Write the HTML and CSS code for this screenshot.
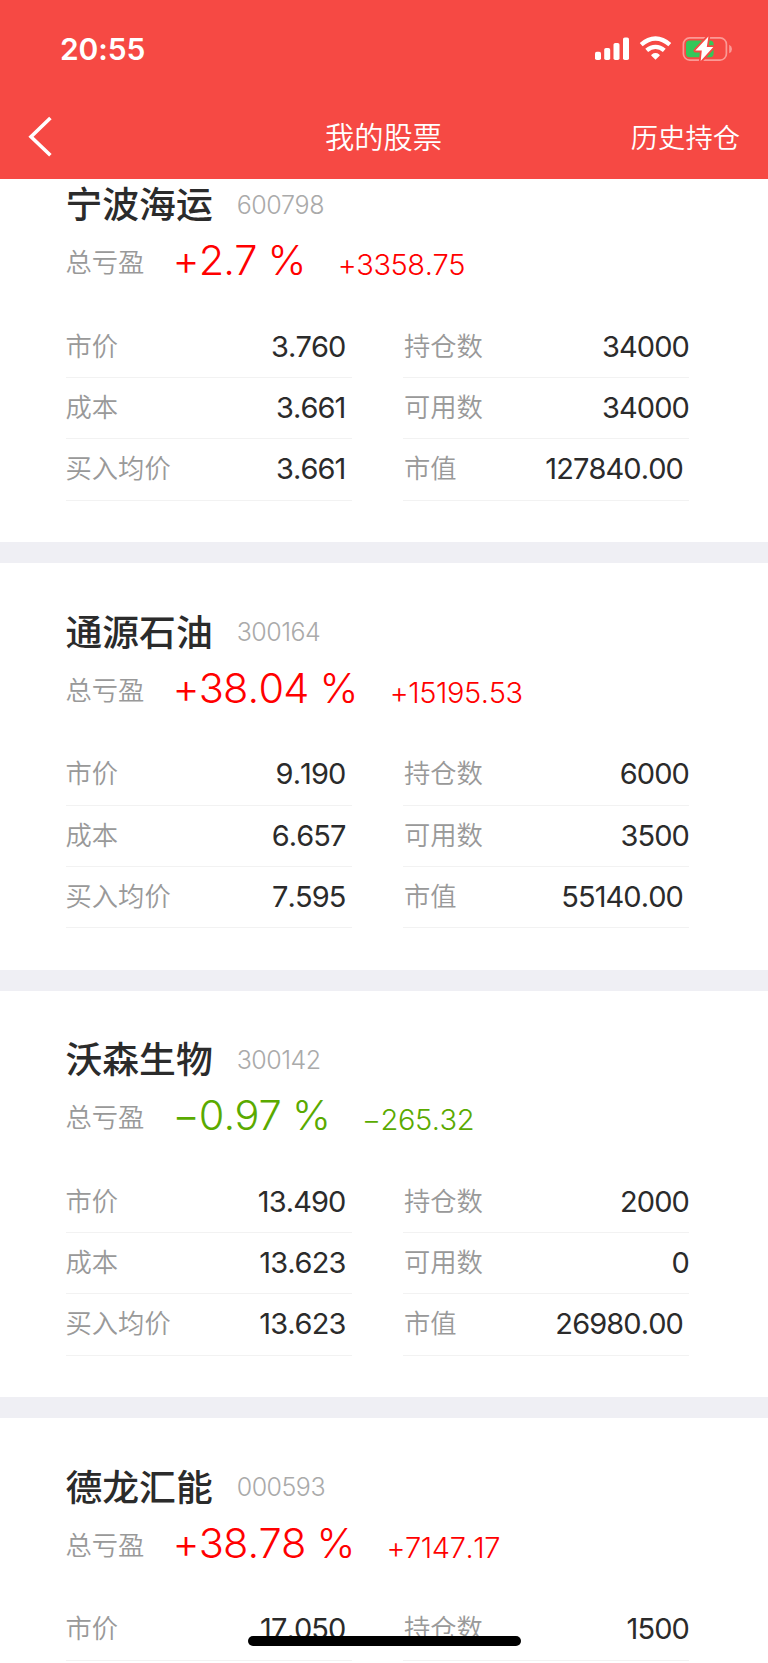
FILE: index.html
```html
<!DOCTYPE html>
<html lang="zh-CN">
<head>
<meta charset="utf-8">
<title>我的股票</title>
<link rel="stylesheet" href="styles.css">
</head>
<body>
<div class="screen">
  <header class="header">
    <div class="status">
      <span class="clock">20:55</span>
      <svg class="status-icons" width="142" height="30" viewBox="0 0 142 30">
        <g fill="#fff">
          <rect x="3" y="17.7" width="6" height="8.3" rx="1.8"/>
          <rect x="12.2" y="14" width="6" height="12" rx="1.8"/>
          <rect x="21.5" y="9" width="6" height="17" rx="1.8"/>
          <rect x="31" y="3.5" width="6" height="22.5" rx="1.8"/>
          <path d="M63.5 25.8 L59.4 21.8 Q58.8 21 59.7 20.4 Q63.5 17.6 67.3 20.4 Q68.2 21 67.6 21.8 Z"/>
        </g>
        <g fill="none" stroke="#fff" stroke-width="4.3">
          <path d="M49.2 10.7 Q56 4.5 63.5 4.5 T77.8 10.7"/>
          <path d="M54.7 16.4 Q58.8 12.8 63.5 12.8 T72.3 16.4"/>
        </g>
        <rect x="91.4" y="3.9" width="43" height="22.2" rx="6.3" fill="none" stroke="#fb9a96" stroke-width="1.7"/>
        <path d="M137.2 10.8 Q140 12 140 15 T137.2 19.2 Z" fill="#fb9a96"/>
        <rect x="94" y="6.6" width="27.6" height="16.6" rx="3.6" fill="#34c759"/>
        <path d="M116.4 2.6 L103.3 16.6 H109.8 L108.7 27 L121.3 13 H114.8 Z" fill="#fff" stroke="#f64944" stroke-width="3.6" paint-order="stroke" stroke-linejoin="round"/>
      </svg>
    </div>
    <nav class="nav">
      <svg class="back" width="26" height="42" viewBox="0 0 26 42"><path d="M23.4 2 L4 20.7 L23.4 39.2" fill="none" stroke="#fff" stroke-width="3.6"/></svg>
      <h1 class="title">我的股票</h1>
      <span class="history">历史持仓</span>
    </nav>
  </header>
  <main class="list">
    <section class="card">
      <div class="head"><h2 class="name">宁波海运</h2><span class="code">600798</span></div>
      <div class="sum up"><span class="label">总亏盈</span><span class="rate">+2.7 %</span><span class="gain">+3358.75</span></div>
      <div class="grid">
        <div class="row"><span class="label">市价</span><span class="val">3.760</span></div>
        <div class="row r"><span class="label">持仓数</span><span class="val">34000</span></div>
        <div class="row"><span class="label">成本</span><span class="val">3.661</span></div>
        <div class="row r"><span class="label">可用数</span><span class="val">34000</span></div>
        <div class="row"><span class="label">买入均价</span><span class="val">3.661</span></div>
        <div class="row r total"><span class="label">市值</span><span class="val">127840.00</span></div>
      </div>
    </section>
    <section class="card">
      <div class="head"><h2 class="name">通源石油</h2><span class="code">300164</span></div>
      <div class="sum up"><span class="label">总亏盈</span><span class="rate">+38.04 %</span><span class="gain">+15195.53</span></div>
      <div class="grid">
        <div class="row"><span class="label">市价</span><span class="val">9.190</span></div>
        <div class="row r"><span class="label">持仓数</span><span class="val">6000</span></div>
        <div class="row"><span class="label">成本</span><span class="val">6.657</span></div>
        <div class="row r"><span class="label">可用数</span><span class="val">3500</span></div>
        <div class="row"><span class="label">买入均价</span><span class="val">7.595</span></div>
        <div class="row r total"><span class="label">市值</span><span class="val">55140.00</span></div>
      </div>
    </section>
    <section class="card">
      <div class="head"><h2 class="name">沃森生物</h2><span class="code">300142</span></div>
      <div class="sum down"><span class="label">总亏盈</span><span class="rate">−0.97 %</span><span class="gain">−265.32</span></div>
      <div class="grid">
        <div class="row"><span class="label">市价</span><span class="val">13.490</span></div>
        <div class="row r"><span class="label">持仓数</span><span class="val">2000</span></div>
        <div class="row"><span class="label">成本</span><span class="val">13.623</span></div>
        <div class="row r"><span class="label">可用数</span><span class="val">0</span></div>
        <div class="row"><span class="label">买入均价</span><span class="val">13.623</span></div>
        <div class="row r total"><span class="label">市值</span><span class="val">26980.00</span></div>
      </div>
    </section>
    <section class="card">
      <div class="head"><h2 class="name">德龙汇能</h2><span class="code">000593</span></div>
      <div class="sum up"><span class="label">总亏盈</span><span class="rate">+38.78 %</span><span class="gain">+7147.17</span></div>
      <div class="grid">
        <div class="row"><span class="label">市价</span><span class="val">17.050</span></div>
        <div class="row r"><span class="label">持仓数</span><span class="val">1500</span></div>
      </div>
    </section>
  </main>
  <div class="home-bar"></div>
</div>
</body>
</html>
```
FILE: styles.css
```css
* { box-sizing: border-box; margin: 0; padding: 0; }
body {
  background: #fff;
  font-family: Inter, "Noto Sans CJK SC", sans-serif;
  font-kerning: none;
  color: #2b2b2b;
}
.screen {
  position: relative;
  width: 768px;
  height: 1663px;
  overflow: hidden;
  display: flex;
  flex-direction: column;
}
.header {
  flex: none;
  height: 179.4px;
  background: #f64944;
  color: #fff;
}
.status {
  height: 98px;
  padding: 0 34px 0 60px;
  display: flex;
  align-items: center;
  justify-content: space-between;
}
.clock { font-size: 30px; font-weight: 600; letter-spacing: -0.1px; line-height: 36px; }
.nav {
  height: 78px;
  padding: 0 28px 0 27px;
  display: grid;
  grid-template-columns: 1fr auto 1fr;
  align-items: center;
}
.title { font-size: 29.3px; font-weight: 350; line-height: 40px; padding-top: 1px; }
.history { justify-self: end; font-size: 27.3px; font-weight: 350; line-height: 40px; padding-top: 3px; }
.list { flex: 1; min-height: 0; overflow: hidden; }
.card {
  height: 427.5px;
  padding: 45.6px 79px 0 65.5px;
  border-bottom: 21px solid #efeff4;
}
.card:first-child { margin-top: -43.5px; }
.head { display: flex; align-items: center; height: 48px; gap: 24px; }
.name { font-size: 36.8px; font-weight: 500; line-height: 48px; }
.code { font-size: 25px; font-weight: 300; letter-spacing: -0.5px; color: #aaa; padding-bottom: 1px; }
.sum {
  display: flex;
  align-items: baseline;
  height: 87.2px;
  line-height: 63px;
}
.label { font-size: 26.3px; font-weight: 350; color: #999; }
.sum .label { align-self: flex-start; line-height: 67px; }
.rate { font-size: 41.5px; font-weight: 350; letter-spacing: -0.8px; margin-left: 28px; }
.gain { font-size: 29px; font-weight: 350; letter-spacing: -0.4px; margin-left: 32px; }
.up { color: #f00; }
.down { color: #5aaa00; }
.grid {
  display: grid;
  grid-template-columns: 286px 286px;
  grid-auto-rows: 61.35px;
  column-gap: 51.5px;
}
.row {
  display: flex;
  justify-content: space-between;
  align-items: baseline;
  line-height: 59px;
  padding-right: 6px;
  border-bottom: 1.5px solid #f2f2f2;
}
.row .label { align-self: flex-start; line-height: 59px; }
.row.r { padding: 0 0 0 1px; }
.row.r.total { padding-right: 6px; }
.val { font-size: 29px; font-weight: 400; letter-spacing: -0.9px; }
.home-bar {
  position: absolute;
  left: 247.5px;
  top: 1636px;
  width: 273.5px;
  height: 10px;
  border-radius: 5px;
  background: #000;
}
```
